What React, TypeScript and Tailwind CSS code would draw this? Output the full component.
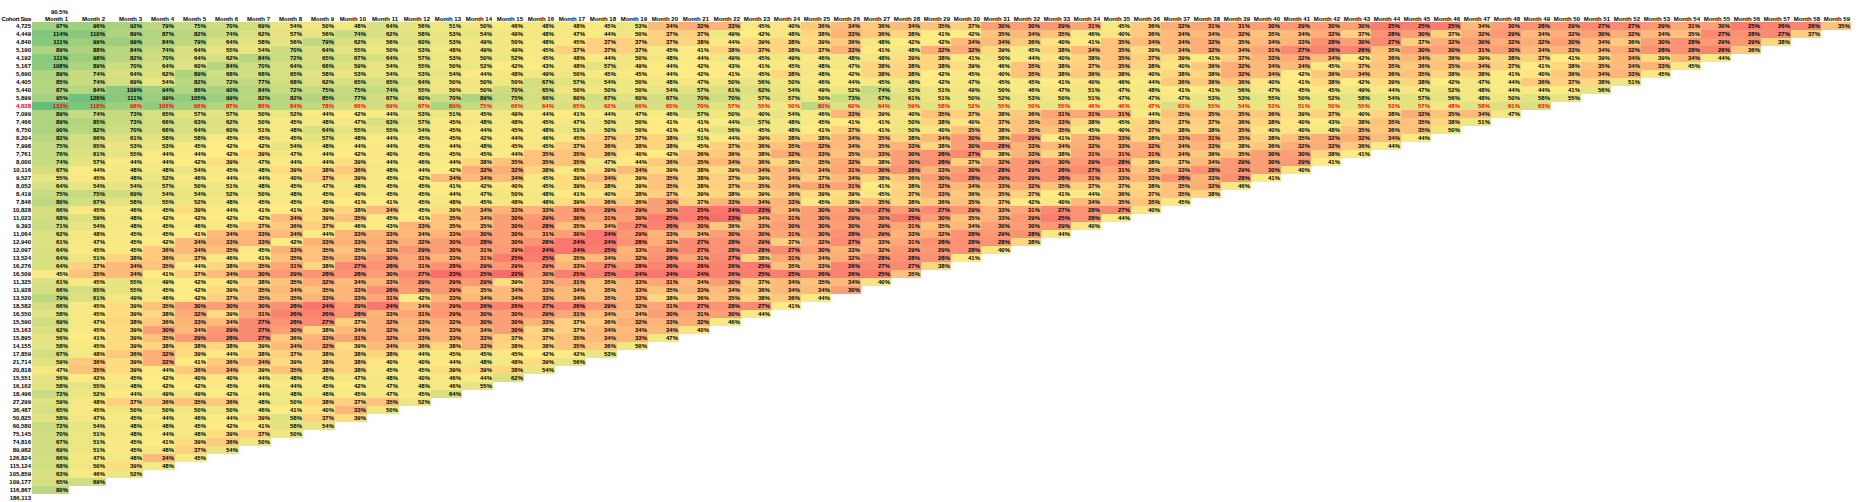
import React from "react";

// cohort sizes, one per row
const COHORTS = [
  "4,725", "4,449", "4,840", "5,190", "4,192", "5,167", "5,690", "4,405", "5,440", "5,899",
  "4,828", "7,099", "7,466", "6,750", "8,204", "7,998", "7,761", "8,000", "10,116", "9,527",
  "8,052", "8,419", "7,846", "10,828", "11,023", "9,393", "11,064", "12,940", "12,097", "13,524",
  "16,276", "16,509", "11,325", "11,928", "13,520", "18,582", "16,550", "15,590", "15,163", "15,895",
  "14,155", "17,859", "21,714", "20,818", "15,551", "16,162", "18,496", "27,299", "36,487", "50,825",
  "60,580", "75,145", "74,816", "89,982", "126,824", "115,124", "105,859", "109,177", "116,867", "186,113",
];

const HIGHLIGHT_ROW = 10;
const MONTHS = 59;

// Month 1 - Month 28
const FIRST = [
  "97 96 92 79 75 70 69 54 50 48 64 56 51 50 46 48 48 45 53 34 32 33 45 40 36 34 36 34",
  "114 110 89 87 82 74 62 57 56 74 62 58 53 54 49 48 47 44 50 37 37 49 42 48 38 33 36 38",
  "111 99 99 84 79 64 58 56 79 62 56 60 53 49 50 48 45 37 37 37 38 44 39 38 39 36 48 42",
  "89 88 84 74 64 55 54 70 64 55 50 53 48 49 49 45 37 37 37 45 41 38 37 38 37 33 41 48",
  "111 98 82 70 64 62 84 72 65 67 64 57 53 50 52 45 48 44 50 48 44 49 45 49 46 48 48 39",
  "108 89 70 64 60 84 70 64 66 59 54 55 50 52 42 43 48 57 49 44 42 43 41 45 48 47 38 38",
  "89 74 64 62 89 68 68 65 58 53 54 53 54 44 48 49 50 45 45 44 42 41 45 38 48 42 38 38",
  "85 74 69 54 82 72 77 68 62 65 65 64 50 50 50 67 57 54 50 48 47 50 56 50 46 44 45 48",
  "87 84 109 94 86 90 84 72 75 75 74 55 50 50 70 65 50 50 50 54 57 61 62 54 49 52 74 53",
  "95 126 111 99 105 99 82 82 85 77 67 60 70 89 75 66 60 67 60 67 70 70 57 57 50 73 67 61",
  "133 118 98 106 96 87 86 84 78 66 69 67 89 75 66 64 65 62 66 65 70 57 55 50 80 60 64 59",
  "89 74 73 65 57 57 50 52 44 42 44 53 51 45 49 44 41 44 47 46 57 50 40 54 46 33 39 40",
  "89 85 73 66 63 62 50 45 48 47 63 57 45 48 48 45 47 50 50 41 41 44 57 48 45 41 41 50",
  "90 82 70 66 64 60 51 48 64 55 55 54 45 44 45 48 51 50 50 41 41 56 45 48 41 37 41 50",
  "82 66 61 58 58 45 45 45 57 48 44 45 45 42 44 46 45 37 37 38 51 44 39 38 38 34 35 38",
  "75 65 53 53 45 42 42 54 48 44 44 45 44 48 45 45 37 36 38 38 45 37 36 35 32 34 35 33",
  "76 61 55 44 44 42 39 47 44 42 40 45 45 45 44 35 35 36 40 42 36 36 38 32 33 35 33 30",
  "74 57 44 44 42 39 47 44 44 39 44 46 44 38 35 35 35 47 44 36 35 34 36 38 35 32 38 30",
  "67 44 48 48 54 45 48 39 38 36 48 44 42 32 32 38 45 39 34 39 38 39 34 34 34 31 30 28",
  "55 45 48 52 46 44 44 40 37 39 45 42 34 34 34 45 39 34 39 35 38 37 39 34 37 34 38 36",
  "64 54 54 57 50 51 48 45 47 48 45 45 41 42 40 45 39 38 39 35 38 37 35 34 31 31 41 38",
  "75 75 69 54 54 52 50 48 45 40 45 45 44 47 50 48 41 40 38 37 39 38 39 36 39 39 45 37",
  "80 67 58 55 52 48 45 45 45 41 41 45 48 45 48 48 39 36 36 30 37 33 34 33 45 38 35 38",
  "66 45 46 45 39 44 41 41 39 38 34 45 39 34 33 33 30 29 29 30 25 24 23 34 30 30 27 30",
  "68 59 48 42 42 42 42 34 39 35 45 41 35 34 30 29 30 31 30 25 25 23 34 31 30 29 30 25",
  "71 54 48 45 46 45 37 36 37 46 43 33 35 35 30 28 35 34 27 26 30 36 33 30 30 30 29 31",
  "62 48 45 45 41 34 33 34 44 33 33 34 33 30 30 31 30 24 29 33 34 30 30 31 30 28 29 33",
  "61 47 45 42 34 33 33 42 33 33 32 32 30 28 30 28 24 24 28 32 27 28 29 37 32 27 33 31",
  "64 45 45 36 34 35 45 33 35 35 33 29 30 31 29 24 24 25 33 29 27 28 28 27 30 33 32 29",
  "64 51 38 36 37 46 41 35 35 33 30 31 33 31 25 25 35 34 32 28 31 27 38 31 34 32 28 28",
  "64 37 34 35 44 38 35 31 38 27 28 31 28 29 29 29 33 27 28 26 26 26 25 35 33 26 27 27",
  "45 35 34 41 37 34 30 29 28 28 30 27 23 25 22 30 25 25 24 24 24 26 25 25 26 26 25 35",
  "61 45 55 49 42 40 38 35 32 34 33 29 29 29 39 33 31 35 33 31 34 30 37 34 35 34 40",
  "66 65 55 45 42 39 35 34 35 33 28 30 29 35 34 33 34 35 33 35 33 34 36 34 34 30",
  "79 61 49 46 42 37 35 35 33 33 31 42 33 34 34 33 34 35 33 38 36 35 38 36 44",
  "66 45 39 35 30 30 30 28 24 29 24 34 29 26 26 27 26 29 32 31 27 28 27 41",
  "58 45 39 38 32 39 31 26 26 28 33 31 29 30 30 29 31 34 34 30 31 30 44",
  "69 47 38 36 33 34 27 28 27 37 32 33 32 30 30 33 37 36 32 33 32 46",
  "62 45 39 30 34 29 27 30 38 34 32 34 33 34 30 38 37 34 34 34 40",
  "56 41 39 35 29 28 27 36 33 31 32 33 33 33 37 37 35 34 33 47",
  "58 45 39 38 38 38 39 34 32 39 34 36 38 33 38 38 35 36 50",
  "67 48 36 32 39 44 38 37 38 38 38 44 45 45 45 42 42 53",
  "59 36 39 32 41 36 34 39 38 38 40 40 44 48 48 39 56",
  "47 35 39 44 36 34 39 35 38 38 45 45 39 39 38 54",
  "56 42 45 42 40 40 44 48 45 47 48 40 46 44 62",
  "58 55 48 42 42 45 44 44 45 42 47 48 46 55",
  "72 52 44 49 49 42 44 48 48 45 47 45 64",
  "59 48 37 36 35 36 48 50 38 37 35 52",
  "65 45 50 50 50 50 46 41 40 33 50",
  "58 47 45 44 46 44 39 58 37 39",
  "72 54 48 48 45 42 41 58 54",
  "70 51 48 44 48 39 37 50",
  "67 51 45 41 39 36 50",
  "69 51 45 48 37 54",
  "66 47 48 34 45",
  "68 50 39 48",
  "63 46 52",
  "65 69",
  "80",
  "",
];

// Month 29 onwards
const SECOND = [
  "35 37 30 30 29 31 45 36 32 31 31 30 29 30 30 25 25 25 34 30 28 29 27 27 29 31 30 25 26 26 35",
  "41 42 35 34 35 46 40 36 34 34 32 35 34 32 37 28 30 37 32 29 34 32 30 32 34 35 27 28 27 37",
  "42 34 34 36 40 41 35 34 34 32 35 34 33 28 30 27 37 32 30 32 32 30 34 36 30 28 29 29 38",
  "32 32 39 45 38 34 35 39 34 32 34 31 27 26 26 35 30 30 31 30 34 33 34 32 28 28 26 36",
  "38 41 50 44 40 38 35 37 39 41 37 33 32 34 42 36 34 36 39 38 37 41 39 34 39 34 44",
  "38 39 46 35 38 37 35 38 40 36 32 34 34 45 37 35 36 35 34 37 41 38 35 34 33 45",
  "42 45 40 35 38 36 38 40 38 38 32 34 42 36 34 36 35 38 38 41 40 36 34 33 45",
  "42 47 45 45 41 40 46 44 36 36 36 40 41 38 42 39 38 42 47 44 36 37 38 51",
  "51 49 50 46 47 51 47 48 41 41 56 47 45 45 49 44 47 52 48 44 44 41 56",
  "51 50 52 53 50 51 47 47 47 53 53 55 50 52 58 54 57 56 48 50 58 55",
  "58 52 55 50 55 46 46 47 63 55 54 53 51 50 55 53 57 48 58 61 63",
  "35 37 38 36 31 31 31 44 35 35 35 36 39 37 40 38 32 35 34 47",
  "38 40 37 35 33 38 45 38 37 37 36 38 40 43 38 35 35 38 51",
  "40 35 38 35 35 45 40 37 38 38 35 40 40 48 35 36 35 50",
  "34 30 38 29 41 33 33 38 33 31 35 38 35 32 32 34 44",
  "38 30 28 33 34 32 33 32 34 33 38 36 32 32 36 44",
  "28 27 38 33 38 31 31 31 34 36 35 30 30 38 41",
  "28 37 32 29 30 29 28 38 37 34 29 30 29 41",
  "33 30 28 29 28 27 31 35 33 28 29 30 40",
  "30 28 29 29 28 31 33 33 28 33 28 41",
  "32 34 33 32 35 37 37 38 35 32 46",
  "33 36 35 37 41 44 36 37 35 38",
  "36 35 37 42 40 34 35 35 45",
  "27 29 33 31 27 28 27 40",
  "30 35 33 29 25 28 44",
  "35 34 30 30 29 40",
  "32 28 29 28 44",
  "28 28 28 38",
  "29 28 40",
  "28 41",
  "38",
];

const rows: number[][] = COHORTS.map((_, i) => {
  const text = `${FIRST[i] ?? ""} ${SECOND[i] ?? ""}`.trim();
  const vals = text ? text.split(/\s+/).map(Number) : [];
  const len = MONTHS - i;
  while (vals.length < len) vals.push(vals[vals.length - 1] ?? 40);
  return vals.slice(0, Math.max(len, 0));
});

// excel style 3-colour scale: red -> yellow -> green
const RED = [248, 105, 107];
const YELLOW = [255, 235, 132];
const GREEN = [99, 190, 123];
const MIN = 22;
const MID = 41;
const MAX = 133;

const heat = (v: number) => {
  let from = YELLOW;
  let to = GREEN;
  let t = 0;
  if (v <= MID) {
    from = RED;
    to = YELLOW;
    t = (v - MIN) / (MID - MIN);
  } else {
    t = (v - MID) / (MAX - MID);
  }
  t = Math.min(1, Math.max(0, t));
  const c = from.map((f, k) => Math.round(f + (to[k] - f) * t));
  return `rgb(${c[0]},${c[1]},${c[2]})`;
};

const GRID =
  "grid grid-cols-[32px_repeat(3,37px)_repeat(9,32px)_repeat(10,31px)_repeat(37,30px)]";

export default function App() {
  return (
    <div className="w-[1860px] h-[502px] bg-white overflow-hidden font-['Liberation_Sans',Arial,sans-serif] font-bold text-black text-[6px] leading-none">
      <div className="h-2" />
      {/* blended average above month 1 */}
      <div className={`${GRID} h-[7px]`}>
        <div />
        <div className="flex items-center justify-end pr-[1px]">90.5%</div>
      </div>

      {/* Header */}
      <div className={`${GRID} h-[7px]`}>
        <div className="flex items-center justify-end pr-[1px] whitespace-nowrap tracking-[-0.35px]">
          Cohort Size
        </div>
        {Array.from({ length: MONTHS }).map((_, m) => (
          <div key={m} className="flex items-center justify-end pr-[1px] whitespace-nowrap">
            Month {m + 1}
          </div>
        ))}
      </div>

      {/* Rows */}
      {rows.map((vals, i) => {
        const hl = i === HIGHLIGHT_ROW;
        return (
          <div key={i} className={`${GRID} h-2`}>
            <div
              className={`flex items-center justify-end pr-[1px] ${hl ? "text-[#ff0000]" : ""}`}
            >
              {COHORTS[i]}
            </div>
            {Array.from({ length: MONTHS }).map((_, m) =>
              m < vals.length ? (
                <div
                  key={m}
                  className={`flex items-center justify-end pr-[1px] ${hl ? "text-[#ff0000]" : ""}`}
                  style={{ backgroundColor: heat(vals[m]) }}
                >
                  {vals[m]}%
                </div>
              ) : (
                <div key={m} />
              )
            )}
          </div>
        );
      })}
    </div>
  );
}
